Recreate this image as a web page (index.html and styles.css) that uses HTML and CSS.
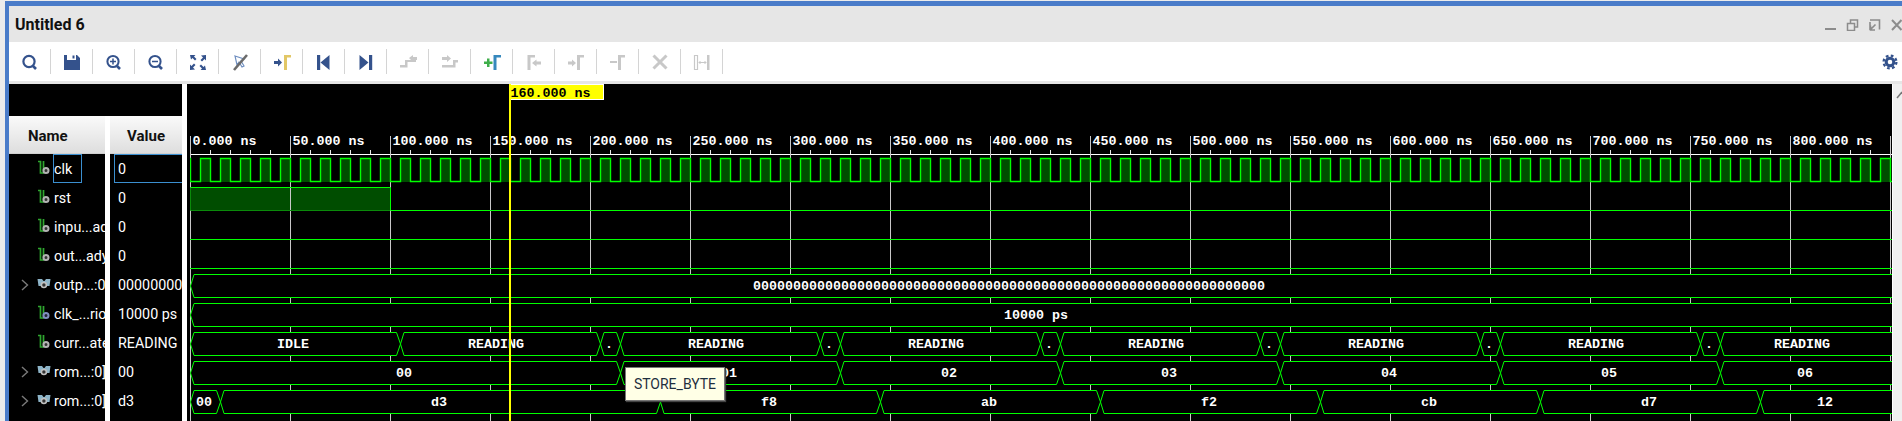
FILE: index.html
```html
<!DOCTYPE html>
<html lang="en">
<head>
    <meta charset="UTF-8">
    <title>Untitled 6</title>
    <link rel="stylesheet" href="styles.css">
</head>
<body>

<svg class="defs" width="0" height="0">
    <symbol id="bit" viewBox="0 0 16 16">
        <path d="M1 1.500h2.500v11.500H6.500V1" fill="none" stroke="#2fa62f" stroke-width="1.700"/>
        <circle cx="9" cy="10.500" r="2.500" fill="#333" stroke="#b4b4b4" stroke-width="2"/>
    </symbol>
    <symbol id="bitclk" viewBox="0 0 16 16">
        <path d="M1 1.500h2.500v11.500H6.500V1" fill="none" stroke="#2fa62f" stroke-width="1.700"/>
        <circle cx="9" cy="10.500" r="2.500" fill="#223" stroke="#7f8fc0" stroke-width="2"/>
    </symbol>
    <symbol id="bus" viewBox="0 0 16 16">
        <path d="M0.500 3h4.500l1.500 2h1l1.500-2h4.500l-1 7h-3.500l-1-1h-1l-1 1H1.500z" fill="#8db4c8"/>
        <circle cx="6.900" cy="9" r="2.500" fill="#333" stroke="#c0c0c0" stroke-width="1.600"/>
    </symbol>
    <symbol id="chevron" viewBox="0 0 8 12">
        <path d="M1 1l5.500 5-5.500 5" fill="none" stroke="#7a7a7a" stroke-width="1.400"/>
    </symbol>
</svg>

<div class="window">
    <div class="titlebar">
        <span class="title">Untitled 6</span>
        <div class="window-controls">
            <svg width="77" height="12" viewBox="0 0 77 12" fill="none" stroke="#8c8c8c">
                <path d="M0 10h11" stroke-width="2"/>
                <path d="M22.500 4.500h7v7h-7zM25.500 4.500v-3.500h7v7h-3" stroke-width="1.500"/>
                <path d="M45 1h9.500v9.500M45 3v8h0M50.500 5.500l-5 5M45.500 6.500v4.500h4.500" stroke-width="1.600"/>
                <path d="M67 1l9.500 10M76.500 1l-9.500 10" stroke-width="2"/>
            </svg>
        </div>
    </div>

    <div class="toolbar">
        <div class="tool"><svg width="24" height="24" fill="none" stroke="#34528c">
            <circle cx="11" cy="11.500" r="5.600" stroke-width="2.200"/><path d="M15 16l3 3" stroke-width="2.600"/></svg></div>
        <div class="tool"><svg width="24" height="24">
            <path d="M4 5h3v5h9V5h1l3 3v12H4z" fill="#34528c"/><path d="M12.500 5.500h2v3h-2z" fill="#34528c"/></svg></div>
        <div class="tool"><svg width="24" height="24" fill="none" stroke="#34528c">
            <circle cx="11" cy="11.500" r="5.600" stroke-width="2"/><path d="M15 16l3 3" stroke-width="2.600"/><path d="M8 11.500h6M11 8.500v6" stroke-width="1.500"/></svg></div>
        <div class="tool"><svg width="24" height="24" fill="none" stroke="#34528c">
            <circle cx="11" cy="11.500" r="5.600" stroke-width="2"/><path d="M15 16l3 3" stroke-width="2.600"/><path d="M8 11.500h6" stroke-width="1.500"/></svg></div>
        <div class="tool"><svg width="24" height="24" fill="#34528c">
            <path d="M4 5h5.500L8 6.500l2.500 2.500-1.500 1.500L6.500 8 5 9.500z"/>
            <path d="M20 5v5.500L18.500 9 16 11.500 14.500 10 17 7.500 15 5.500z"/>
            <path d="M4 20v-5.500L5.500 16 8 13.500 9.500 15 7 17.500 9 19.500z"/>
            <path d="M20 20h-5.500l1.500-1.500-2.500-2.500 1.500-1.500 2.500 2.500 1.500-1.500z"/></svg></div>
        <div class="tool"><svg width="24" height="24" fill="none">
            <path d="M7 6l9 3-3 2 3 5-2 1-3-5-2 3z" stroke="#6f8fc0" stroke-width="1.200"/>
            <path d="M6 20L19 5" stroke="#6b6b6b" stroke-width="2.600"/></svg></div>
        <div class="tool"><svg width="24" height="24">
            <path d="M4 11h4V8.500l4 4-4 4V14H4z" fill="#34528c"/><path d="M14 5h7v2.500h-4V20h-3z" fill="#e2c766"/></svg></div>
        <div class="tool"><svg width="24" height="24" fill="#34528c">
            <path d="M5 5h3.200v15H5zM17.500 5v15L8.500 12.500z"/></svg></div>
        <div class="tool"><svg width="24" height="24" fill="#34528c">
            <path d="M5.500 5v15l9-7.500zM15 5h3.200v15H15z"/></svg></div>
        <div class="tool"><svg width="24" height="24" fill="#c8c8c8">
            <path d="M4 15h5v-5h2.500v7.500H4z"/><path d="M13 8l4-3v2h4v3h-4v2z"/><path d="M10 10h10v2H10z"/></svg></div>
        <div class="tool"><svg width="24" height="24" fill="#c8c8c8">
            <path d="M4 7h5V5l4 3.500L9 12v-2H4z"/><path d="M4 15h11v-5h5v2.500h-2.500v5H4z"/></svg></div>
        <div class="tool"><svg width="24" height="24">
            <path d="M4 11.500h3v-3h2.500v3h3V14h-3v3H7v-3H4z" fill="#3fae4a"/><path d="M13.500 5H21v2.500h-4.500V20h-3z" fill="#3688bd"/></svg></div>
        <div class="tool"><svg width="24" height="24" fill="#c8c8c8">
            <path d="M5.500 5H13v2.500H8.500V20h-3z"/><path d="M10 13l4.500-3.500V11.500H19v3h-4.500v2z"/></svg></div>
        <div class="tool"><svg width="24" height="24" fill="#c8c8c8">
            <path d="M4 11.500h4V9.500l4 3.500-4 3.500v-2H4z"/><path d="M13 5h7v2.500h-4V20h-3z"/></svg></div>
        <div class="tool"><svg width="24" height="24" fill="#c8c8c8">
            <path d="M4 11h7v2H4z"/><path d="M12 5h7v2.500h-4V20h-3z"/></svg></div>
        <div class="tool"><svg width="24" height="24" fill="none" stroke="#c8c8c8">
            <path d="M5.500 5.500l13 13M18.500 5.500l-13 13" stroke-width="3"/></svg></div>
        <div class="tool"><svg width="24" height="24" fill="none" stroke="#c8c8c8">
            <path d="M4.500 5.500h3v14h-3z" stroke-width="1.200"/><path d="M17 5v15h2.500V5z" fill="#c8c8c8" stroke="none"/>
            <path d="M9 12.500h7M10.500 11l-1.500 1.500 1.500 1.500M14.500 11l1.500 1.500-1.500 1.500" stroke-width="1"/></svg></div>
        <div class="toolbar-end"><svg width="18" height="18" viewBox="-9 -9 18 18" fill="none" stroke="#34528c">
            <circle r="3.800" stroke-width="3"/><circle r="6.400" stroke-width="2.300" stroke-dasharray="2.700 2.330"/></svg></div>
    </div>

    <div class="main">
        <div class="signals">
            <div class="signals-top"></div>
            <div class="columns">
                <div class="name-col">
                    <div class="col-header name-header">Name</div>
                    <div class="row">
                        <span class="expander"></span><svg class="row-icon"><use href="#bit"/></svg>
                        <span class="signal selected">clk</span>
                    </div>
                    <div class="row">
                        <span class="expander"></span><svg class="row-icon"><use href="#bit"/></svg>
                        <span class="signal">rst</span>
                    </div>
                    <div class="row">
                        <span class="expander"></span><svg class="row-icon"><use href="#bit"/></svg>
                        <span class="signal">inpu...ady</span>
                    </div>
                    <div class="row">
                        <span class="expander"></span><svg class="row-icon"><use href="#bit"/></svg>
                        <span class="signal">out...ady</span>
                    </div>
                    <div class="row">
                        <span class="expander"><svg width="8" height="12"><use href="#chevron"/></svg></span><svg class="row-icon"><use href="#bus"/></svg>
                        <span class="signal">outp...:0]</span>
                    </div>
                    <div class="row">
                        <span class="expander"></span><svg class="row-icon"><use href="#bitclk"/></svg>
                        <span class="signal">clk_...riod</span>
                    </div>
                    <div class="row">
                        <span class="expander"></span><svg class="row-icon"><use href="#bit"/></svg>
                        <span class="signal">curr...ate</span>
                    </div>
                    <div class="row">
                        <span class="expander"><svg width="8" height="12"><use href="#chevron"/></svg></span><svg class="row-icon"><use href="#bus"/></svg>
                        <span class="signal">rom...:0]</span>
                    </div>
                    <div class="row">
                        <span class="expander"><svg width="8" height="12"><use href="#chevron"/></svg></span><svg class="row-icon"><use href="#bus"/></svg>
                        <span class="signal">rom...:0]</span>
                    </div>
                </div>
                <div class="value-col">
                    <div class="col-header">Value</div>
                    <div class="row"><span class="value selected">0</span></div>
                    <div class="row"><span class="value">0</span></div>
                    <div class="row"><span class="value">0</span></div>
                    <div class="row"><span class="value">0</span></div>
                    <div class="row"><span class="value">00000000</span></div>
                    <div class="row"><span class="value">10000 ps</span></div>
                    <div class="row"><span class="value">READING</span></div>
                    <div class="row"><span class="value">00</span></div>
                    <div class="row"><span class="value">d3</span></div>
                </div>
            </div>
        </div>

        <div class="wave-panel">
            <!-- viewBox uses the same numbers as the window, so x = 190 + 2px per ns -->
            <svg class="waves" width="1705" height="337" viewBox="187 84 1705 337">
                <defs>
                    <pattern id="grid" patternUnits="userSpaceOnUse" x="190" y="0" width="100" height="10">
                        <rect width="1" height="10" fill="#c8c8c8"/>
                    </pattern>
                    <pattern id="ticks" patternUnits="userSpaceOnUse" x="190" y="0" width="20" height="10">
                        <rect width="1" height="10" fill="#e8e8e8"/>
                    </pattern>
                    <pattern id="clock" patternUnits="userSpaceOnUse" x="195" y="157" width="20" height="26">
                        <rect x="5" y="1" width="10" height="24" fill="#004d00"/>
                        <path d="M0 24.500h5.500V1.500h10v23H20" fill="none" stroke="#00ff00" stroke-width="1.400"/>
                    </pattern>
                </defs>

                <!-- time scale -->
                <rect x="190" y="150" width="1702" height="4" fill="url(#ticks)"/>
                <rect x="190" y="154" width="1702" height="1" fill="#fff"/>
                <g class="time-labels">
                    <text x="192.500" y="144.500">0.000 ns</text>
                    <text x="292.500" y="144.500">50.000 ns</text>
                    <text x="392.500" y="144.500">100.000 ns</text>
                    <text x="492.500" y="144.500">150.000 ns</text>
                    <text x="592.500" y="144.500">200.000 ns</text>
                    <text x="692.500" y="144.500">250.000 ns</text>
                    <text x="792.500" y="144.500">300.000 ns</text>
                    <text x="892.500" y="144.500">350.000 ns</text>
                    <text x="992.500" y="144.500">400.000 ns</text>
                    <text x="1092.500" y="144.500">450.000 ns</text>
                    <text x="1192.500" y="144.500">500.000 ns</text>
                    <text x="1292.500" y="144.500">550.000 ns</text>
                    <text x="1392.500" y="144.500">600.000 ns</text>
                    <text x="1492.500" y="144.500">650.000 ns</text>
                    <text x="1592.500" y="144.500">700.000 ns</text>
                    <text x="1692.500" y="144.500">750.000 ns</text>
                    <text x="1792.500" y="144.500">800.000 ns</text>
                </g>

                <!-- rst high part goes under the grid -->
                <rect x="190" y="187" width="200" height="24" fill="#004d00"/>
                <rect x="190" y="136" width="701" height="285" fill="url(#grid)"/>
                <rect x="890" y="136" width="1001" height="285" fill="url(#grid)"/>

                <!-- single bit rows -->
                <rect x="190" y="157" width="1702" height="26" fill="url(#clock)"/>
                <path d="M190.500 187.500H390.500" fill="none" stroke="#00ff00"/>
                <path d="M190.500 187.500V210.500H390" fill="none" stroke="#0a8a0a"/>
                <path d="M390.500 187.500V210.500H1892" fill="none" stroke="#00ff00"/>
                <path d="M190 239.500H1892M190 268.500H1892" fill="none" stroke="#00ff00"/>

                <!-- bus rows -->
                <g class="bus" transform="translate(0 274)">
                    <polygon points="190.500,12 194,0.500 2000,0.500 2000,23.500 194,23.500"/>
                    <text x="1009" y="16">0000000000000000000000000000000000000000000000000000000000000000</text>
                </g>
                <g class="bus" transform="translate(0 303)">
                    <polygon points="190.500,12 194,0.500 2000,0.500 2000,23.500 194,23.500"/>
                    <text x="1036" y="16">10000 ps</text>
                </g>
                <g class="bus" transform="translate(0 332)">
                    <polygon points="190.500,12 194,0.500 396.500,0.500 400.500,12 396.500,23.500 194,23.500"/>
                    <polygon points="400.500,12 404,0.500 596.500,0.500 600.500,12 596.500,23.500 404,23.500"/>
                    <polygon points="600.500,12 604,0.500 616.500,0.500 620.500,12 616.500,23.500 604,23.500"/>
                    <polygon points="620.500,12 624,0.500 816.500,0.500 820.500,12 816.500,23.500 624,23.500"/>
                    <polygon points="820.500,12 824,0.500 836.500,0.500 840.500,12 836.500,23.500 824,23.500"/>
                    <polygon points="840.500,12 844,0.500 1036.500,0.500 1040.500,12 1036.500,23.500 844,23.500"/>
                    <polygon points="1040.500,12 1044,0.500 1056.500,0.500 1060.500,12 1056.500,23.500 1044,23.500"/>
                    <polygon points="1060.500,12 1064,0.500 1256.500,0.500 1260.500,12 1256.500,23.500 1064,23.500"/>
                    <polygon points="1260.500,12 1264,0.500 1276.500,0.500 1280.500,12 1276.500,23.500 1264,23.500"/>
                    <polygon points="1280.500,12 1284,0.500 1476.500,0.500 1480.500,12 1476.500,23.500 1284,23.500"/>
                    <polygon points="1480.500,12 1484,0.500 1496.500,0.500 1500.500,12 1496.500,23.500 1484,23.500"/>
                    <polygon points="1500.500,12 1504,0.500 1696.500,0.500 1700.500,12 1696.500,23.500 1504,23.500"/>
                    <polygon points="1700.500,12 1704,0.500 1716.500,0.500 1720.500,12 1716.500,23.500 1704,23.500"/>
                    <polygon points="1720.500,12 1724,0.500 2000,0.500 2000,23.500 1724,23.500"/>
                    <text x="293" y="16">IDLE</text>
                    <text x="496" y="16">READING</text>
                    <text x="609" y="16">.</text>
                    <text x="716" y="16">READING</text>
                    <text x="829" y="16">.</text>
                    <text x="936" y="16">READING</text>
                    <text x="1049" y="16">.</text>
                    <text x="1156" y="16">READING</text>
                    <text x="1269" y="16">.</text>
                    <text x="1376" y="16">READING</text>
                    <text x="1489" y="16">.</text>
                    <text x="1596" y="16">READING</text>
                    <text x="1709" y="16">.</text>
                    <text x="1802" y="16">READING</text>
                </g>
                <g class="bus" transform="translate(0 361)">
                    <polygon points="190.500,12 194,0.500 616.500,0.500 620.500,12 616.500,23.500 194,23.500"/>
                    <polygon points="620.500,12 624,0.500 836.500,0.500 840.500,12 836.500,23.500 624,23.500"/>
                    <polygon points="840.500,12 844,0.500 1056.500,0.500 1060.500,12 1056.500,23.500 844,23.500"/>
                    <polygon points="1060.500,12 1064,0.500 1276.500,0.500 1280.500,12 1276.500,23.500 1064,23.500"/>
                    <polygon points="1280.500,12 1284,0.500 1496.500,0.500 1500.500,12 1496.500,23.500 1284,23.500"/>
                    <polygon points="1500.500,12 1504,0.500 1716.500,0.500 1720.500,12 1716.500,23.500 1504,23.500"/>
                    <polygon points="1720.500,12 1724,0.500 2000,0.500 2000,23.500 1724,23.500"/>
                    <text x="404" y="16">00</text>
                    <text x="729" y="16">01</text>
                    <text x="949" y="16">02</text>
                    <text x="1169" y="16">03</text>
                    <text x="1389" y="16">04</text>
                    <text x="1609" y="16">05</text>
                    <text x="1805" y="16">06</text>
                </g>
                <g class="bus" transform="translate(0 390)">
                    <polygon points="190.500,12 194,0.500 216.500,0.500 220.500,12 216.500,23.500 194,23.500"/>
                    <polygon points="220.500,12 224,0.500 656.500,0.500 660.500,12 656.500,23.500 224,23.500"/>
                    <polygon points="660.500,12 664,0.500 876.500,0.500 880.500,12 876.500,23.500 664,23.500"/>
                    <polygon points="880.500,12 884,0.500 1096.500,0.500 1100.500,12 1096.500,23.500 884,23.500"/>
                    <polygon points="1100.500,12 1104,0.500 1316.500,0.500 1320.500,12 1316.500,23.500 1104,23.500"/>
                    <polygon points="1320.500,12 1324,0.500 1536.500,0.500 1540.500,12 1536.500,23.500 1324,23.500"/>
                    <polygon points="1540.500,12 1544,0.500 1756.500,0.500 1760.500,12 1756.500,23.500 1544,23.500"/>
                    <polygon points="1760.500,12 1764,0.500 2000,0.500 2000,23.500 1764,23.500"/>
                    <text x="204" y="16">00</text>
                    <text x="439" y="16">d3</text>
                    <text x="769" y="16">f8</text>
                    <text x="989" y="16">ab</text>
                    <text x="1209" y="16">f2</text>
                    <text x="1429" y="16">cb</text>
                    <text x="1649" y="16">d7</text>
                    <text x="1825" y="16">12</text>
                </g>

                <!-- cursor -->
                <rect x="509" y="84" width="2" height="337" fill="#ffff00"/>
                <rect x="510.500" y="84.500" width="93" height="15" fill="#ffff00" stroke="#fff"/>
                <rect x="509" y="84" width="2" height="16" fill="#ffff00"/>
                <text class="cursor-label" x="510.500" y="96.500">160.000 ns</text>
            </svg>
            <div class="tooltip">STORE_BYTE</div>
        </div>

        <div class="scrollbar">
            <svg width="9" height="20"><path d="M4 14l5-6" stroke="#777" stroke-width="1.500" fill="none"/></svg>
        </div>
    </div>
</div>

</body>
</html>
```

FILE: styles.css
```css
html, body {
    margin: 0;
    height: 421px;
    overflow: hidden;
}
body {
    background-color: #ececec;
    font-family: Roboto, "Noto Sans", sans-serif;
    font-size: 14.3px;
}
.defs {
    display: block;
}
.window {
    margin: 1px 0 0 5px;
    height: 420px;
    border-top: 5px solid #4a7cc9;
    border-left: 4px solid #4a7cc9;
    display: flex;
    flex-direction: column;
    background-color: #fff;
}

.titlebar {
    height: 36px;
    flex: none;
    background-color: #e6e6e6;
    display: flex;
    align-items: center;
    justify-content: space-between;
    padding-left: 6px;
}
.title {
    font-weight: 700;
    font-size: 16px;
    color: #111;
    margin-top: 1px;
}
.window-controls {
    height: 12px;
    margin-top: 2px;
}
.window-controls svg {
    display: block;
}

.toolbar {
    height: 39px;
    flex: none;
    display: flex;
    align-items: center;
    background-color: #fff;
    border-bottom: 3px solid #e6e6e6;
}
.tool {
    width: 42px;
    height: 25px;
    flex: none;
    box-sizing: border-box;
    border-right: 1px solid #d4d4d4;
    display: flex;
    align-items: center;
    justify-content: center;
}
.tool svg {
    flex: none;
}
.toolbar-end {
    margin-left: auto;
    margin-right: 3px;
    height: 18px;
}
.toolbar-end svg {
    display: block;
}

.main {
    flex: 1;
    min-height: 0;
    display: flex;
    background-color: #fff;
}

.signals {
    width: 173px;
    flex: none;
    display: flex;
    flex-direction: column;
}
.signals-top {
    height: 32px;
    flex: none;
    background-color: #000;
}
.columns {
    flex: 1;
    display: flex;
    gap: 5px;
    min-height: 0;
}
.name-col {
    width: 96px;
    flex: none;
    background-color: #000;
    overflow: hidden;
}
.value-col {
    flex: 1;
    min-width: 0;
    background-color: #000;
    overflow: hidden;
}
.col-header {
    height: 38px;
    box-sizing: border-box;
    background: linear-gradient(#fafafa, #dedede);
    border-bottom: 1px solid #d0d0d0;
    color: #111;
    font-weight: 700;
    font-size: 15px;
    line-height: 40px;
    text-align: center;
}
.name-header {
    text-align: left;
    padding-left: 19px;
}

.row {
    height: 29px;
    display: flex;
    align-items: stretch;
    color: #fff;
    white-space: nowrap;
    overflow: hidden;
}
.expander {
    width: 28px;
    flex: none;
    box-sizing: border-box;
    padding: 9px 0 0 12px;
}
.expander svg {
    display: block;
}
.row-icon {
    width: 16px;
    height: 16px;
    flex: none;
    margin-top: 6px;
}
.signal, .value {
    box-sizing: border-box;
    height: 29px;
    line-height: 29px;
    border: 1px solid transparent;
}
.signal {
    padding-right: 9px;
}
.value {
    flex: 1;
    margin-left: 4px;
    padding-left: 3px;
    border-right: none;
}
.selected {
    border-color: #3b8fd0;
}

.wave-panel {
    width: 1705px;
    flex: none;
    margin-left: 5px;
    position: relative;
    overflow: hidden;
    background-color: #000;
}
.waves {
    display: block;
    font-family: "Liberation Mono", monospace;
    font-size: 13.33px;
}
.time-labels text {
    fill: #fff;
    font-weight: 700;
}
.bus polygon {
    fill: #000;
    stroke: #00ff00;
    stroke-width: 1;
}
.bus text {
    fill: #fff;
    font-weight: 700;
    text-anchor: middle;
}
.cursor-label {
    fill: #000;
    font-weight: 700;
}
.tooltip {
    position: absolute;
    left: 438px;
    top: 283px;
    width: 100px;
    height: 34px;
    box-sizing: border-box;
    background-color: #ffffe6;
    border: 1px solid #767676;
    box-shadow: 1px 1px 1px #444;
    color: #1f2f3f;
    font-size: 14px;
    line-height: 32px;
    text-align: center;
}

.scrollbar {
    width: 9px;
    flex: none;
    margin-left: 1px;
    background-color: #f0f0f0;
}
.scrollbar svg {
    display: block;
}
```
